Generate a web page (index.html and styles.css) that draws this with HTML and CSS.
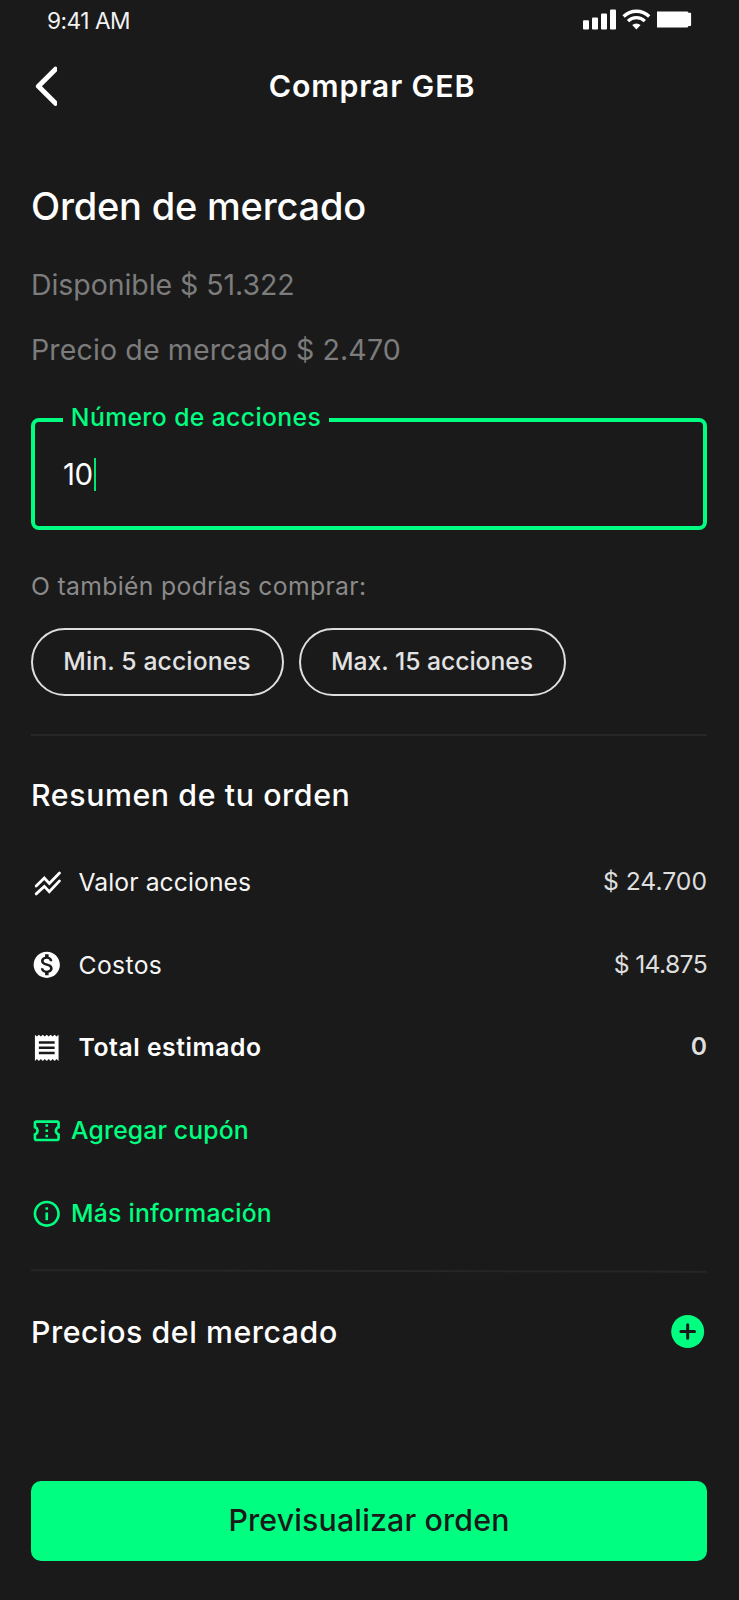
FILE: index.html
```html
<!DOCTYPE html>
<html lang="es">
<head>
<meta charset="utf-8">
<meta name="viewport" content="width=device-width, initial-scale=1">
<title>Comprar GEB</title>
<link rel="stylesheet" href="styles.css">
</head>
<body>
<div class="screen">
  <div class="status">
    <span class="status-time">9:41 AM</span>
    <svg class="status-icons" width="110" height="22" viewBox="0 0 110 22" fill="#fff">
      <rect x="1" y="12.3" width="6" height="9.2" rx="1"/>
      <rect x="10" y="9.4" width="6" height="12.1" rx="1"/>
      <rect x="19" y="5.4" width="6" height="16.1" rx="1"/>
      <rect x="28" y="1.6" width="6" height="19.9" rx="1"/>
      <g fill="none" stroke="#fff" stroke-width="3.3">
        <path d="M41.6 8.5a18.2 18.2 0 0 1 25.6 0"/>
        <path d="M46 13.1a12 12 0 0 1 16.8 0"/>
      </g>
      <path d="M50.2 17.1a6.2 6.2 0 0 1 8.4 0L54.4 21.6z"/>
      <path d="M75 3.500h30.500l1 1.300h2q.6 0 .6 1v11.200q0 1-.6 1h-2l-1 1.600H75z"/>
    </svg>
  </div>

  <header class="header">
    <svg class="back" width="24" height="40" viewBox="0 0 24 40"><path d="M22.500 3.200L5.400 20.300l17.100 17" fill="none" stroke="#fff" stroke-width="5" stroke-linecap="round" stroke-linejoin="round"/></svg>
    <h1 class="header-title">Comprar GEB</h1>
  </header>

  <main class="content">
    <h2 class="order-type">Orden de mercado</h2>
    <p class="balance">Disponible $ 51.322</p>
    <p class="market-price">Precio de mercado $ 2.470</p>

    <div class="field">
      <label class="field-label">Número de acciones</label>
      <span class="field-value">10</span><span class="caret"></span>
    </div>

    <p class="hint">O también podrías comprar:</p>
    <div class="chips">
      <button class="chip chip-min">Min. 5 acciones</button>
      <button class="chip chip-max">Max. 15 acciones</button>
    </div>

    <hr class="divider divider-top">

    <h3 class="section-title">Resumen de tu orden</h3>
    <div class="rows">
      <div class="row">
        <svg class="icon" viewBox="0 0 31.5 31.5" fill="none" stroke="#fff" stroke-width="2.800" stroke-linecap="round"><path d="M5.200 19l8.100-7.900 5 5.400L28.500 6M5.200 26.900l8.100-7.500 5 5.400L28.500 13.900"/></svg>
        <span class="label">Valor acciones</span><span class="amount">$ 24.700</span>
      </div>
      <div class="row">
        <svg class="icon" viewBox="0 0 24 24" fill="#fff"><path d="M12 2C6.480 2 2 6.480 2 12s4.480 10 10 10 10-4.480 10-10S17.520 2 12 2zm1.410 16.090V20h-2.670v-1.930c-1.710-.36-3.160-1.460-3.270-3.400h1.960c.1 1.050.82 1.870 2.650 1.870 1.960 0 2.400-.98 2.400-1.590 0-.83-.44-1.610-2.670-2.140-2.480-.6-4.180-1.620-4.180-3.670 0-1.720 1.390-2.840 3.110-3.210V4h2.670v1.950c1.860.45 2.790 1.860 2.850 3.390H14.300c-.05-1.110-.64-1.870-2.220-1.870-1.500 0-2.400.68-2.400 1.640 0 .84.65 1.390 2.670 1.910s4.180 1.390 4.180 3.910c-.01 1.830-1.380 2.830-3.120 3.160z"/></svg>
        <span class="label label-costs">Costos</span><span class="amount amount-costs">$ 14.875</span>
      </div>
      <div class="row row-total">
        <svg class="icon" viewBox="0 0 24 24" fill="#fff"><path d="M18 17H6v-2h12v2zm0-4H6v-2h12v2zm0-4H6V7h12v2zM3 22l1.500-1.500L6 22l1.500-1.500L9 22l1.500-1.500L12 22l1.500-1.500L15 22l1.500-1.500L18 22l1.500-1.500L21 22V2l-1.500 1.500L18 2l-1.500 1.500L15 2l-1.500 1.500L12 2l-1.500 1.500L9 2 7.500 3.500 6 2 4.500 3.500 3 2v20z"/></svg>
        <span class="label">Total estimado</span><span class="amount">0</span>
      </div>
      <a class="row link link-coupon">
        <svg class="icon" viewBox="0 0 24 24" fill="#00ff80"><path d="M22 10V6c0-1.110-.9-2-2-2H4c-1.100 0-1.990.89-1.990 2v4c1.100 0 1.990.9 1.990 2s-.89 2-2 2v4c0 1.100.9 2 2 2h16c1.100 0 2-.9 2-2v-4c-1.100 0-2-.9-2-2s.9-2 2-2zm-2-1.460c-1.190.69-2 1.990-2 3.460s.81 2.770 2 3.460V18H4v-2.540c1.190-.69 2-1.990 2-3.460 0-1.480-.8-2.770-1.990-3.460L4 6h16v2.540zM11 15h2v2h-2zm0-4h2v2h-2zm0-4h2v2h-2z"/></svg>
        <span class="label">Agregar cupón</span>
      </a>
      <a class="row link link-info">
        <svg class="icon" viewBox="0 0 24 24" fill="#00ff80"><path d="M11 7h2v2h-2zm0 4h2v6h-2zm1-9C6.480 2 2 6.480 2 12s4.480 10 10 10 10-4.480 10-10S17.520 2 12 2zm0 18c-4.410 0-8-3.590-8-8s3.590-8 8-8 8 3.590 8 8-3.590 8-8 8z"/></svg>
        <span class="label">Más información</span>
      </a>
    </div>

    <hr class="divider divider-bottom">

    <div class="market">
      <h3 class="market-title">Precios del mercado</h3>
      <svg class="plus" width="34" height="34" viewBox="0 0 34 34"><circle cx="16.700" cy="16.500" r="16.500" fill="#00ff80"/><path d="M16.700 9.700v13.600M9.900 16.500h13.600" stroke="#1a1a1a" stroke-width="3" stroke-linecap="round"/></svg>
    </div>

    <button class="submit">Previsualizar orden</button>
  </main>
</div>
</body>
</html>
```
FILE: styles.css
```css
* { box-sizing: border-box; }
body {
  margin: 0;
  background: #1a1a1a;
  color: #fff;
  font-family: Inter, "Liberation Sans", sans-serif;
}
h1, h2, h3, p { margin: 0; }
button { font-family: inherit; margin: 0; }
.screen { width: 739px; height: 1600px; overflow: hidden; background: #1a1a1a; }

.status {
  display: flex;
  justify-content: space-between;
  align-items: flex-start;
  height: 42px;
  padding: 0 47px 0 47px;
}
.status-time { font-size: 22.7px; line-height: 42px; letter-spacing: -0.5px; color: #f2f2f2; }
.status-icons { margin-top: 8px; }

.header {
  display: grid;
  grid-template-columns: 24px 1fr 24px;
  align-items: center;
  height: 87px;
  padding: 0 28px 0 33px;
}
.header-title {
  text-align: center;
  font-size: 30.3px;
  line-height: 40px;
  font-weight: 600;
  letter-spacing: 0.9px;
}

.content { display: flex; flex-direction: column; padding: 52px 32px 0 31px; }
.order-type { font-size: 38px; line-height: 50px; font-weight: 500; letter-spacing: -0.2px; }
.balance, .market-price { font-size: 28.5px; line-height: 40px; font-weight: 400; color: #7c7c7c; }
.balance { margin-top: 34px; letter-spacing: -0.06px; }
.market-price { margin-top: 25px; letter-spacing: 0.14px; }

.field {
  position: relative;
  display: flex;
  align-items: center;
  height: 112px;
  margin-top: 48px;
  padding: 0 28px;
  border: 4px solid #00ff80;
  border-radius: 8px;
}
.field-label {
  position: absolute;
  top: -20px;
  left: 28px;
  width: 266px;
  background: #1a1a1a;
  color: #00ff80;
  text-align: center;
  font-size: 24.7px;
  line-height: 30px;
  font-weight: 500;
  letter-spacing: 0.4px;
}
.field-value { font-size: 29.5px; line-height: 40px; font-weight: 400; letter-spacing: -0.5px; }
.caret { width: 2px; height: 33px; margin-left: 1px; background: #00e676; }

.hint { margin-top: 39px; font-size: 24.7px; line-height: 34px; font-weight: 400; letter-spacing: 0.35px; color: #8a8a8a; }
.chips { display: flex; gap: 15px; margin-top: 25px; }
.chip {
  height: 68px;
  padding: 0 1px 2px 0;
  border: 2px solid #dedede;
  border-radius: 34px;
  background: transparent;
  color: #e2e2e2;
  font-size: 24.7px;
  font-weight: 500;
}
.chip-min { width: 253px; letter-spacing: 0.12px; }
.chip-max { width: 267px; letter-spacing: -0.02px; }

.divider { width: 676px; height: 2px; border: 0; margin: 0; background: #262626; }
.divider-top { margin-top: 38px; }
.divider-bottom { margin-top: 15px; transform: rotate(0.12deg); }

.section-title { margin-top: 39px; font-size: 30.3px; line-height: 40px; font-weight: 500; letter-spacing: 0.6px; }
.rows { display: grid; grid-auto-rows: 82.8px; margin-top: 26px; }
.row { display: flex; align-items: center; font-size: 24.7px; line-height: 30px; font-weight: 400; color: #f5f5f5; }
.icon { width: 31.5px; height: 31.5px; margin-right: 16px; }
.label { flex: 1; padding-bottom: 1px; letter-spacing: 0.08px; }
.label-costs { letter-spacing: 0.36px; }
.amount { padding-bottom: 2px; color: #dedede; }
.amount-costs { letter-spacing: -0.65px; }
.row-total { font-weight: 600; }
.row-total .label { color: #fff; letter-spacing: 0.56px; }
.row-total .amount { padding-bottom: 4px; }
.link { font-weight: 500; color: #00ff80; }
.link .icon { margin-right: 8.5px; }
.link-coupon .label { letter-spacing: 0.15px; }
.link-info .label { letter-spacing: 0.25px; }

.market { display: flex; align-items: center; justify-content: space-between; height: 40px; margin-top: 40px; padding-right: 2px; }
.market-title { font-size: 30.3px; line-height: 40px; font-weight: 500; letter-spacing: 0.55px; }

.submit {
  height: 80px;
  margin-top: 129px;
  padding: 0 0 2px;
  border: 0;
  border-radius: 10px;
  background: #00ff80;
  color: #1a1a1a;
  font-size: 30.3px;
  font-weight: 500;
  letter-spacing: 0.17px;
}
```
